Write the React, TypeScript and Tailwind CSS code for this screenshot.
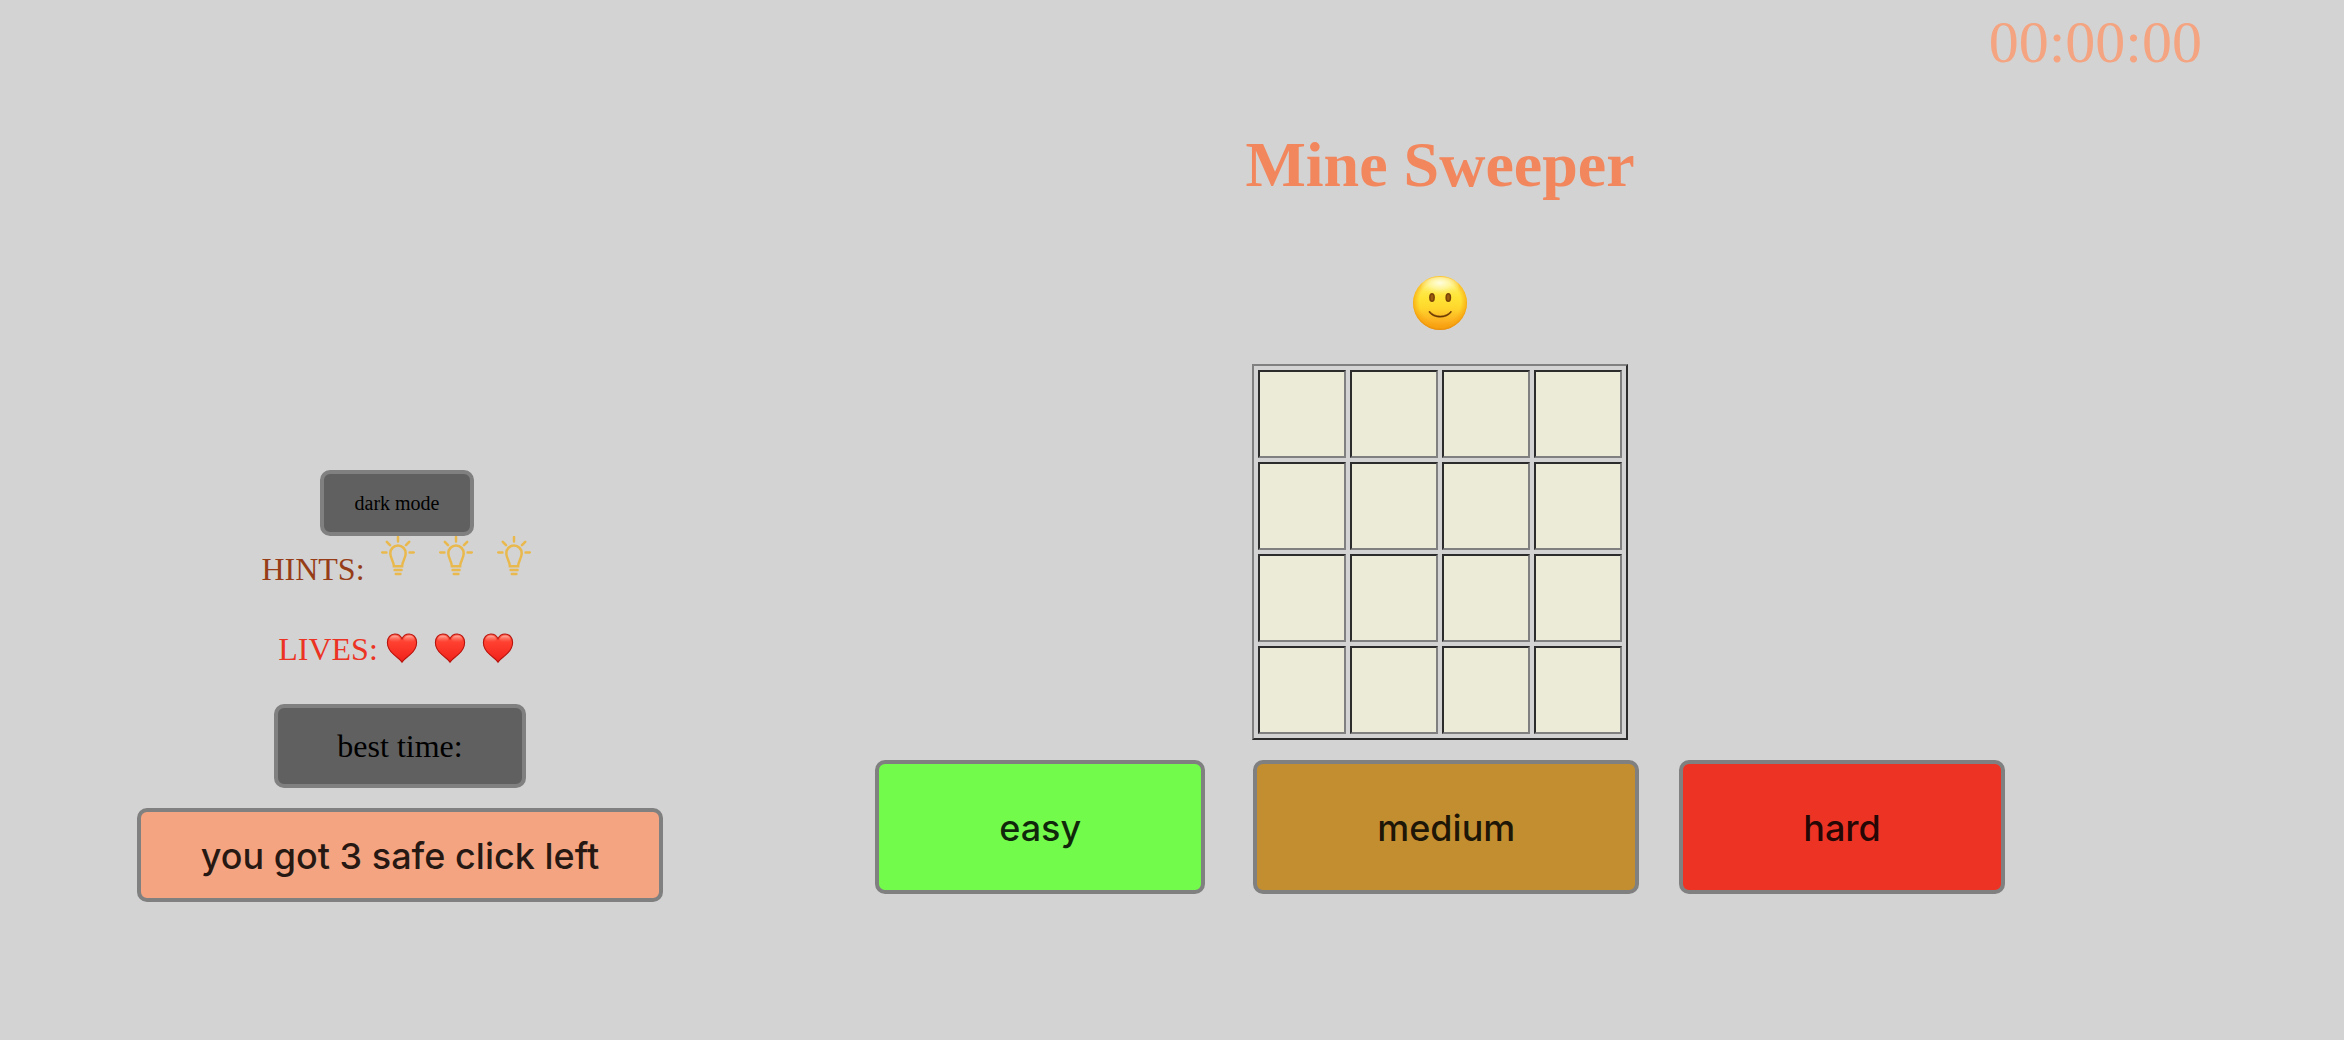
import { useState } from "react";

const serif = "font-['Liberation_Serif',serif]";
const sans = "font-['Inter',sans-serif] text-[36px] font-medium text-black/85";
const box = "rounded-[10px] border-4 border-[#808080]";
const level = "px-[120px] pt-[41px] pb-[39px]";

function Smiley() {
  return (
    <svg viewBox="0 0 56 56" className="size-14" role="img" aria-label="smiling face">
      <defs>
        <linearGradient id="face" x1="0" y1="0" x2="0" y2="1">
          <stop offset="0" stopColor="#fff27a" />
          <stop offset="0.4" stopColor="#ffe436" />
          <stop offset="0.6" stopColor="#ffd62c" />
          <stop offset="0.85" stopColor="#fcae20" />
          <stop offset="1" stopColor="#f5950f" />
        </linearGradient>
        <radialGradient id="rim" cx="0.5" cy="0.48" r="0.53">
          <stop offset="0.72" stopColor="#f8a80c" stopOpacity="0" />
          <stop offset="0.9" stopColor="#f7a30c" stopOpacity="0.6" />
          <stop offset="1" stopColor="#de8208" stopOpacity="0.95" />
        </radialGradient>
        <radialGradient id="shine" cx="0.5" cy="0.3" r="0.6">
          <stop offset="0" stopColor="#fffee6" stopOpacity="0.95" />
          <stop offset="0.5" stopColor="#fffbc0" stopOpacity="0.6" />
          <stop offset="1" stopColor="#fff27a" stopOpacity="0" />
        </radialGradient>
      </defs>
      <circle cx="28" cy="28" r="27" fill="url(#face)" />
      <circle cx="28" cy="28" r="27" fill="url(#rim)" />
      <ellipse cx="28" cy="12" rx="19" ry="10" fill="url(#shine)" />
      <ellipse cx="20" cy="22.5" rx="2.9" ry="4.5" fill="#7a4307" />
      <ellipse cx="36.3" cy="22.5" rx="2.9" ry="4.5" fill="#7a4307" />
      <ellipse cx="20" cy="22.5" rx="1.4" ry="3" fill="#9a5e0c" />
      <ellipse cx="36.3" cy="22.5" rx="1.4" ry="3" fill="#9a5e0c" />
      <path d="M17.5 36C20 39.2 23.8 41 28.2 41S36.5 39.2 39 36C39.5 36.2 39.5 36.8 39.1 37.4C37 40.4 32.8 42.2 28.2 42.2S19.2 40.4 17.2 37.4C16.9 36.8 17 36.2 17.5 36Z" fill="#6b3804" stroke="#6b3804" strokeWidth="0.5" />
    </svg>
  );
}

function Bulb() {
  return (
    <svg
      viewBox="0 0 34 40"
      className="h-10 w-[34px]"
      fill="none"
      stroke="#e9b94e"
      strokeWidth="2.5"
      strokeLinecap="round"
      role="img"
      aria-label="hint"
    >
      <path d="M17 1V5.4M5.8 5.8L9 9.2M28.2 5.8L25 9.2M1.2 16.4H5.4M28.6 16.4H32.8" />
      <path d="M12.9 30.3C12.9 25.5 9.3 22.3 9.3 17.2A7.7 7.7 0 0 1 24.7 17.2C24.7 22.3 21.1 25.5 21.1 30.3Z" />
      <path d="M13.6 34.1H20.6M14.8 37.9H19.4" />
    </svg>
  );
}

function Heart() {
  return (
    <svg viewBox="0 0 32 32" className="size-8" role="img" aria-label="life">
      <defs>
        <linearGradient id="heart" x1="0" y1="0" x2="0" y2="1">
          <stop offset="0" stopColor="#ff5c4a" />
          <stop offset="0.3" stopColor="#ff4030" />
          <stop offset="1" stopColor="#f0201a" />
        </linearGradient>
        <linearGradient id="gloss" x1="0" y1="0" x2="0" y2="1">
          <stop offset="0" stopColor="#ffb3a6" />
          <stop offset="1" stopColor="#ff5545" stopOpacity="0" />
        </linearGradient>
      </defs>
      <path
        d="M16 30.2C14.6 27.8 11.5 25.8 8.2 22.9C4 19.3 1.4 15.2 1.4 10.4C1.4 5.6 4.6 2 8.8 2C12.2 2 14.8 3.8 16 6.8C17.2 3.8 19.8 2 23.2 2C27.4 2 30.6 5.6 30.6 10.4C30.6 15.2 28 19.3 23.8 22.9C20.5 25.8 17.4 27.8 16 30.2Z"
        fill="url(#heart)"
        stroke="#b8140e"
        strokeWidth="1.1"
      />
      <ellipse cx="8.8" cy="7" rx="5.2" ry="3.6" fill="url(#gloss)" />
      <ellipse cx="23.2" cy="7" rx="5.2" ry="3.6" fill="url(#gloss)" />
    </svg>
  );
}

const rows = [0, 1, 2, 3];

export default function App() {
  const [hints] = useState(3);
  const [lives] = useState(3);

  return (
    <div className={`min-h-screen bg-[#d3d3d3] ${serif}`}>
      <header className="flex justify-end pr-[142px]">
        <time className="text-[60px] leading-[84px] text-[#f4a480]">00:00:00</time>
      </header>
      <div className="grid grid-cols-[800fr_1280fr_264fr]">
        <aside className="flex flex-col items-center pt-[386px]">
          <button type="button" className={`${box} mr-1.5 bg-[#606060] px-[31px] py-4 text-[20px] leading-[26px] text-black`}>
            dark mode
          </button>
          <div className="flex items-start gap-4 pr-2 text-[32px] leading-[34px] text-[#963d17]">
            <span className="pt-4">HINTS:</span>
            <span className="flex gap-6">
              {Array.from({ length: hints }, (_, i) => <Bulb key={i} />)}
            </span>
          </div>
          <div className="mt-[46px] flex items-start gap-2 pr-2 text-[32px] leading-[34px] text-[#ec3323]">
            <span>LIVES:</span>
            <span className="flex gap-4">
              {Array.from({ length: lives }, (_, i) => <Heart key={i} />)}
            </span>
          </div>
          <div className={`${box} mt-[38px] bg-[#606060] px-[59px] py-5 text-[32px] leading-[36px] text-black`}>
            best time:
          </div>
          <button type="button" className={`${box} ${sans} mt-5 bg-[#f4a480] px-[60px] pt-[21px] pb-[19px] leading-[46px]`}>
            you got 3 safe click left
          </button>
        </aside>
        <main className="flex flex-col items-center pt-[45px]">
          <h1 className="text-[64px] leading-[72px] font-bold text-[#f2875e]">Mine Sweeper</h1>
          <button type="button" aria-label="restart" className="mt-[74px]">
            <Smiley />
          </button>
          <table className="mt-[33px] border-separate border-spacing-1 border-2 border-t-[#808080] border-r-[#2c2c2c] border-b-[#2c2c2c] border-l-[#808080]">
            <tbody>
              {rows.map((r) => (
                <tr key={r}>
                  {rows.map((c) => (
                    <td
                      key={c}
                      className="size-[88px] border-2 border-t-[#2c2c2c] border-r-[#808080] border-b-[#808080] border-l-[#2c2c2c] bg-[#ecebd7] p-0"
                    />
                  ))}
                </tr>
              ))}
            </tbody>
          </table>
          <div className={`${sans} mt-5 flex leading-[46px]`}>
            <button type="button" className={`${box} ${level} mr-12 bg-[#73fb4c]`}>easy</button>
            <button type="button" className={`${box} ${level} mr-10 bg-[#c38e30]`}>medium</button>
            <button type="button" className={`${box} ${level} bg-[#ed3324]`}>hard</button>
          </div>
        </main>
      </div>
    </div>
  );
}
